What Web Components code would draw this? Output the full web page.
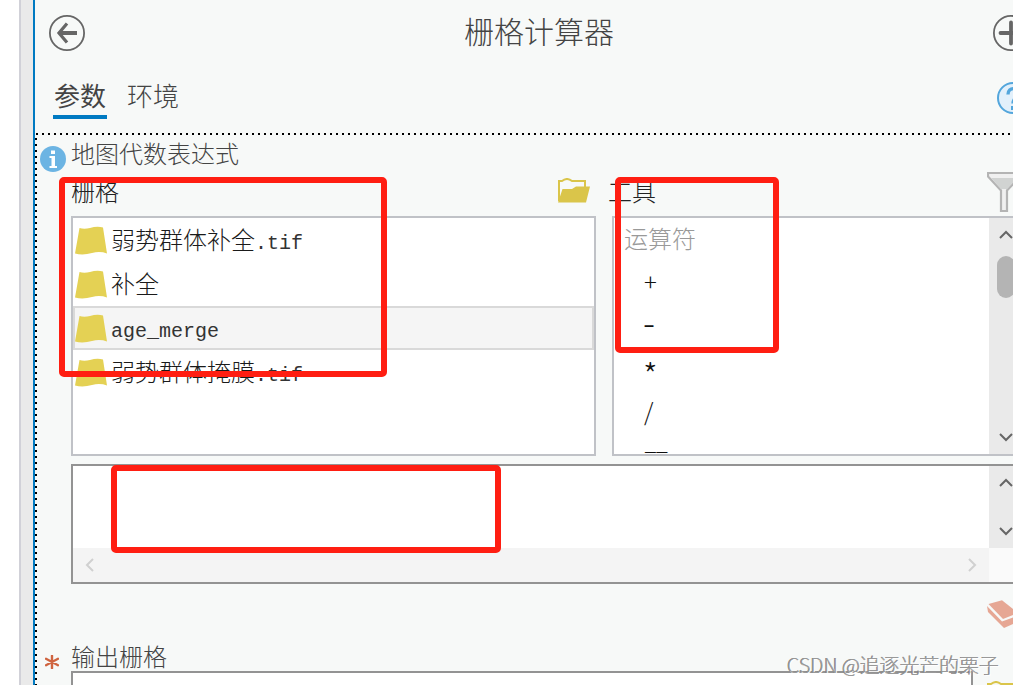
<!DOCTYPE html>
<html lang="zh-CN">
<head>
<meta charset="utf-8">
<title>栅格计算器</title>
<style>
  body {
    margin: 0;
    width: 1013px;
    height: 685px;
    overflow: hidden;
    background: #fff;
    font-family: "Liberation Sans", "Noto Sans CJK SC", sans-serif;
    font-weight: 300;
    color: #444;
  }
</style>
</head>
<body>
<raster-calculator></raster-calculator>
<mark-box style="left:59px;top:177px;width:328px;height:200px"></mark-box>
<mark-box style="left:615px;top:177px;width:164px;height:176px"></mark-box>
<mark-box style="left:111px;top:465px;width:390px;height:88px"></mark-box>
<water-mark>CSDN @追逐光芒的栗子</water-mark>

<script>
const ICONS = {
  back: `<svg width="36" height="36" viewBox="0 0 36 36" fill="none" stroke="#666">
    <circle cx="18" cy="18" r="17.1" stroke-width="1.8"/>
    <path d="M28 18H11" stroke-width="4"/><path d="M18 8.5L10 18l8 9.5" stroke-width="3.2"/></svg>`,
  add: `<svg width="36" height="36" viewBox="0 0 36 36" fill="none" stroke="#666">
    <circle cx="18" cy="18" r="17.1" stroke-width="1.8"/>
    <path d="M18 7.5v21M7.5 18h21" stroke-width="3.8" stroke-linecap="round"/></svg>`,
  help: `<svg width="32" height="32" viewBox="0 0 32 32" fill="none" stroke="#53a6dc">
    <circle cx="16" cy="16" r="15" fill="#e2f0fb" stroke-width="2"/>
    <path d="M11 12.5C11 4.500 22 5 21.500 11.500C21.300 15 16 15.500 16 21.500" stroke-width="3.4"/>
    <path d="M16 24v4" stroke-width="4"/></svg>`,
  info: `<svg width="26" height="26" viewBox="0 0 26 26">
    <circle cx="13" cy="13" r="13" fill="#6cb4e3"/>
    <path d="M11 4.500h4v3.500h-4zM9.500 10h5.500v10h2v2H9.500v-2h2v-8h-2z" fill="#fff"/></svg>`,
  folder: `<svg width="32" height="25" viewBox="0 0 32 25">
    <path d="M1 23V3h3q5-4 10 0h13v6" fill="none" stroke="#dac54a" stroke-width="2"/>
    <path d="M0 24.500L4.500 11H14l4-2.500h14L28 24.500z" fill="#dac54a"/></svg>`,
  filter: `<svg width="34" height="40" viewBox="0 0 34 40">
    <path d="M1 1h32v3.500L20 18.500V39h-6V18.500L1 4.500z" fill="#f0f0f0" stroke="#b4b4b4" stroke-width="2.200"/>
    <path d="M4 6h26L20 17h-6z" fill="#d1d3d2"/></svg>`,
  layer: `<svg width="32" height="29" viewBox="0 0 32 29">
    <path d="M4.500 2Q9 3.500 15 2Q22 0 28 1.500L32 27.500Q25 25 17 27Q8 29.500 0 27.500z" fill="#e4d154"/></svg>`,
  eraser: `<svg width="38" height="29" viewBox="0 0 38 29" fill="#e6a794">
    <path d="M1.500 4L15 .3 31 13 16 19z"/>
    <path d="M0 6L15 21.500 35 14v6L17 28 1 12z"/></svg>`,
  required: `<svg width="14" height="14" viewBox="0 0 14 14" stroke="#cf6440" stroke-width="2.400" stroke-linecap="round">
    <path d="M7 .8v12.400M1 3.800l12 6.400M13 3.800L1 10.200"/></svg>`
};

function chevron(dir) {
  const paths = {
    up: 'M2 10L8 4l6 6',
    down: 'M2 6l6 6 6-6',
    left: 'M11 2L5 8l6 6',
    right: 'M5 2l6 6-6 6'
  };
  return `<svg width="16" height="16" viewBox="0 0 16 16" fill="none" stroke="currentColor" stroke-width="2"><path d="${paths[dir]}"/></svg>`;
}

function define(name, getHTML) {
  customElements.define(name, class extends HTMLElement {
    constructor() {
      super();
      this.attachShadow({mode: 'open'});
    }
    connectedCallback() {
      this.shadowRoot.innerHTML = getHTML(this);
    }
  });
}

define('ui-icon', el => `<style>
    :host { display: block; flex: none; }
    svg { display: block; }
  </style>${ICONS[el.getAttribute('name')]}`);

define('tab-item', () => `<style>
    :host { display: block; height: 41px; padding: 0 1px; font-size: 26px; line-height: 38px; box-sizing: border-box; white-space: nowrap; }
    :host([active]) { border-bottom: 4px solid #007ac2; font-weight: 400; }
  </style><slot></slot>`);

define('scroll-bar', el => {
  const horizontal = el.hasAttribute('horizontal');
  return `<style>
    :host { display: flex; flex: none; flex-direction: column; align-items: center; justify-content: space-between;
      box-sizing: border-box; width: 34px; padding: 10px 0; background: #eaeaea; color: #666; }
    :host([horizontal]) { flex-direction: row; width: auto; height: 34px; padding: 0 9px; background: #f4f4f4; color: #d0d0d0; }
    svg { display: block; }
    .thumb { width: 18px; height: 42px; margin: 12px 0 auto; border-radius: 9px; background: #b4b4b4; }
  </style>
  ${chevron(horizontal ? 'left' : 'up')}
  ${el.hasAttribute('thumb') ? '<div class="thumb"></div>' : ''}
  ${chevron(horizontal ? 'right' : 'down')}`;
});

define('raster-item', () => `<style>
    :host { display: flex; align-items: center; gap: 4px; height: 44px; padding-left: 2px; box-sizing: border-box;
      font-size: 24px; line-height: 44px; color: #1a1a1a; white-space: nowrap; }
    :host([selected]) { background: #f5f5f5; border: 2px solid #d9d9d9; padding-left: 0; }
    div { padding-top: 1px; }
    ::slotted(span) { font: 400 20px "Liberation Mono", monospace; color: #333; }
  </style>
  <ui-icon name="layer"></ui-icon><div><slot></slot></div>`);

define('tool-item', () => `<style>
    :host { display: block; height: 43.3px; padding-left: 30px; font: 300 24px/43.3px "Noto Sans CJK SC", sans-serif;
      letter-spacing: -1.3px; color: #111; }
    :host([group]) { height: 41.3px; padding-left: 10px; line-height: 39.3px; letter-spacing: 0; color: #999; }
    /* the hyphen and the asterisk are small in this font */
    :host([sign="minus"]) { padding-left: 29px; font-size: 36px; line-height: 34px; }
    :host([sign="times"]) { padding-left: 29px; font-size: 33px; line-height: 56px; }
  </style><slot></slot>`);

define('list-frame', () => `<style>
    :host { display: flex; box-sizing: border-box; height: 240px; border: 2px solid #c0c2c7; background: #fff; overflow: hidden; }
    .items { flex: 1; min-width: 0; }
  </style>
  <div class="items"><slot></slot></div><slot name="bar"></slot>`);

define('expression-box', () => `<style>
    :host { display: grid; grid-template: 82px 34px / 1fr 34px; border: 2px solid #939393; background: #fff; }
    .corner { background: #fafafa; }
  </style>
  <div></div><scroll-bar></scroll-bar>
  <scroll-bar horizontal></scroll-bar><div class="corner"></div>`);

define('mark-box', () => `<style>
    :host { position: absolute; box-sizing: border-box; border: 6px solid #ff1e12; border-radius: 5px; }
  </style>`);

define('water-mark', () => `<style>
    :host { position: absolute; left: 787px; top: 650px; font: 300 20px/30px "Noto Sans CJK SC", sans-serif; white-space: nowrap;
      letter-spacing: -.15px; color: #999; text-shadow: 1px 1px 0 #fff, -.5px -.5px 0 #777; }
  </style><slot></slot>`);

define('raster-calculator', () => `<style>
    :host { display: flex; width: 1043px; height: 685px; box-sizing: border-box; padding-left: 19px; overflow: hidden; }
    .gutter { flex: none; width: 12px; border-left: 2px solid #d1d1d8; border-right: 2px solid #007ac2; background: #eaeaea; }
    .panel { flex: none; display: flex; flex-direction: column; width: 1008px; background: #f7f9f8; }
    header { display: flex; align-items: center; justify-content: space-between; height: 66px; padding: 0 14px; }
    h1 { margin: 0; font-size: 30px; font-weight: 300; line-height: 66px; }
    nav { display: flex; height: 67px; padding: 12px 14px 0 18px; box-sizing: border-box; gap: 19px; }
    nav ui-icon { margin: 4px 0 0 auto; }
    /* square 2px dots, one every 6px */
    .group { flex: none; height: 552px; box-sizing: border-box; padding: 4px 18px 0 5px;
      background:
        repeating-linear-gradient(90deg, #000 0 2px, transparent 2px 6px) 1px 0 / 100% 2px no-repeat,
        repeating-linear-gradient(180deg, #000 0 2px, transparent 2px 6px) 0 5px / 2px 100% no-repeat; }
    .title { display: flex; align-items: center; gap: 5px; height: 36px; font-size: 24px; line-height: 36px; }
    .title ui-icon { margin-top: 8px; }
    .body { padding-left: 31px; }
    .columns { display: grid; grid-template-columns: 525px 413px; column-gap: 16px; }
    .caption { display: flex; justify-content: space-between; height: 43px; font-size: 24px; line-height: 40px; color: #222; }
    .caption.raster { padding-right: 6px; }
    .caption.raster ui-icon { margin-top: 5px; }
    .caption.tool { padding-right: 4px; margin-left: -4px; }
    .caption.tool ui-icon { margin-top: -1px; }
    expression-box { margin-top: 8px; }
    .clear { display: flex; justify-content: flex-end; height: 54px; padding-top: 16px; box-sizing: border-box; }
    .output { display: flex; align-items: center; height: 33px; gap: 12px; padding-left: 5px; font-size: 24px; line-height: 33px; }
    .output ui-icon { margin-top: 14px; }
    .output span { padding-top: 5px; }
    .field { display: flex; gap: 14px; }
    .field div { width: 902px; height: 44px; box-sizing: border-box; border: 2px solid #939393; background: #fff; }
    .field ui-icon { margin-top: 10px; }
  </style>
  <div class="gutter"></div>
  <div class="panel">
    <header>
      <ui-icon name="back"></ui-icon>
      <h1>栅格计算器</h1>
      <ui-icon name="add"></ui-icon>
    </header>
    <nav>
      <tab-item active>参数</tab-item>
      <tab-item>环境</tab-item>
      <ui-icon name="help"></ui-icon>
    </nav>
    <div class="group">
      <div class="title"><ui-icon name="info"></ui-icon><span>地图代数表达式</span></div>
      <div class="body">
        <div class="columns">
          <div class="caption raster"><span>栅格</span><ui-icon name="folder"></ui-icon></div>
          <div class="caption tool"><span>工具</span><ui-icon name="filter"></ui-icon></div>
          <list-frame>
            <raster-item>弱势群体补全<span>.tif</span></raster-item>
            <raster-item>补全</raster-item>
            <raster-item selected><span>age_merge</span></raster-item>
            <raster-item>弱势群体掩膜<span>.tif</span></raster-item>
          </list-frame>
          <list-frame>
            <tool-item group>运算符</tool-item>
            <tool-item>+</tool-item>
            <tool-item sign="minus">-</tool-item>
            <tool-item sign="times">*</tool-item>
            <tool-item>/</tool-item>
            <tool-item>==</tool-item>
            <scroll-bar slot="bar" thumb></scroll-bar>
          </list-frame>
        </div>
        <expression-box></expression-box>
        <div class="clear"><ui-icon name="eraser"></ui-icon></div>
      </div>
      <div class="output"><ui-icon name="required"></ui-icon><span>输出栅格</span></div>
      <div class="body field"><div></div><ui-icon name="folder"></ui-icon></div>
    </div>
  </div>`);
</script>
</body>
</html>
